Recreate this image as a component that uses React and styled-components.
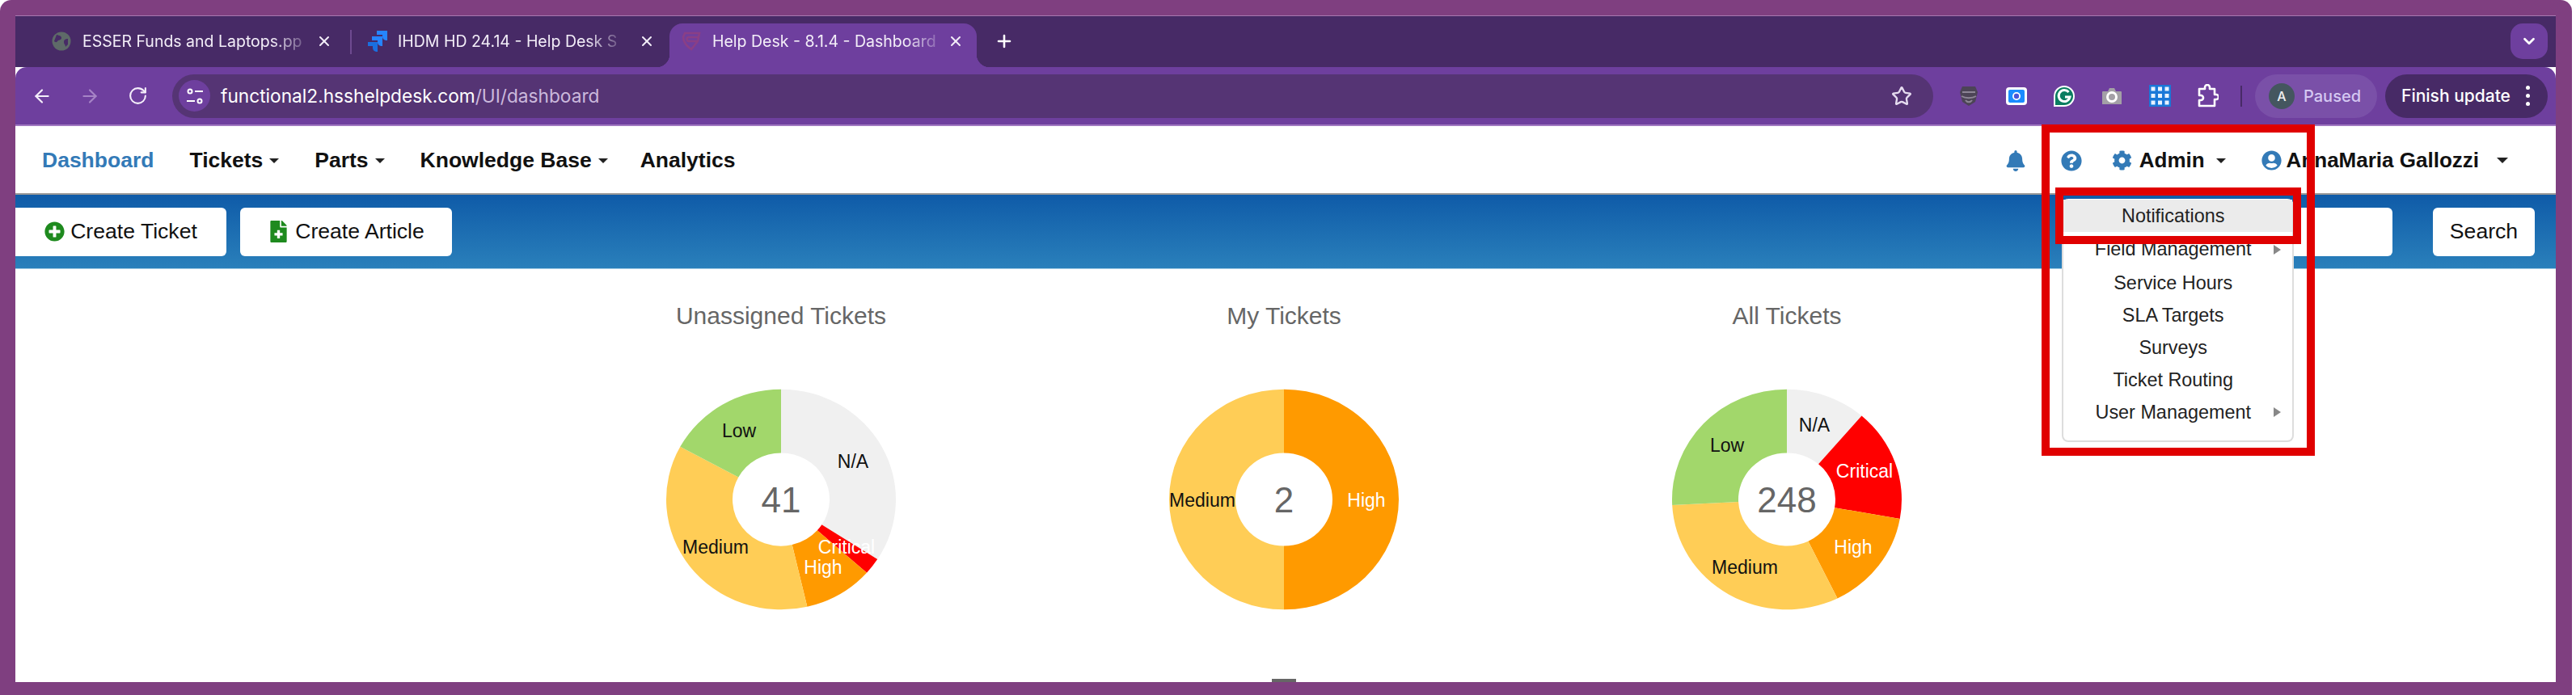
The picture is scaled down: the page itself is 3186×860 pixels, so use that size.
import React from "react";
import styled, { createGlobalStyle } from "styled-components";
import { ArrowLeft, ArrowRight, RotateCw, Star, X, Plus, ChevronDown } from "lucide-react";
import { FaBell, FaQuestionCircle, FaCog, FaUserCircle, FaPlusCircle, FaFileMedical } from "react-icons/fa";

const Global = createGlobalStyle`
  html, body { margin: 0; padding: 0; background: #fff; }
  body { font-family: "Liberation Sans", Arial, sans-serif; }
  * { box-sizing: border-box; }
`;

const Frame = styled.div`
  width: 3181px; height: 860px; background: #7f3f80; padding: 19px 20px 16px 19px;
  border-radius: 14px 14px 0 0;
`;
const Window = styled.div`
  position: relative; width: 3142px; height: 825px; display: flex; flex-direction: column;
  background: #fff; overflow: hidden; border-top: 1px solid #a878b0;
`;
const TabStrip = styled.div`
  height: 63px; background: #472a66; display: flex; align-items: flex-start; padding: 9px 10px 0 25px; flex: none;
`;
const TabRow = styled.div`
  display: flex; align-items: flex-start;
`;
const Tab = styled.div`
  position: relative; height: 54px; width: ${p => p.$w}px; display: flex; align-items: center; padding: 0 ${p => p.$pr}px 10px ${p => p.$pl}px;
  color: #f3eef8; font-family: Inter, "Liberation Sans", sans-serif; font-size: 19.5px;
  ${p => p.$active && `
    background: #6e3f9e; border-radius: 16px 16px 0 0;
    &::before, &::after { content: ""; position: absolute; bottom: 0; width: 16px; height: 16px; }
    &::before { left: -16px; background: radial-gradient(circle at 0 0, transparent 16px, #6e3f9e 16.5px); }
    &::after { right: -16px; background: radial-gradient(circle at 100% 0, transparent 16px, #6e3f9e 16.5px); }
  `}
`;
const TabDivider = styled.span`
  flex: none; width: 2px; height: 30px; margin: 8px 0 0 0; background: #6e4a90;
`;
const TabFavicon = styled.span`
  flex: none; width: 26px; height: 26px; margin-right: ${p => p.$gap}px; display: flex; align-items: center; justify-content: center;
`;
const TabLabel = styled.span`
  flex: none; white-space: nowrap;
  -webkit-mask-image: linear-gradient(90deg, #000 86%, rgba(0,0,0,.25) 100%);
  mask-image: linear-gradient(90deg, #000 86%, rgba(0,0,0,.25) 100%);
`;
const TabClose = styled.span`
  margin-left: auto; display: flex; color: #f3eef8;
`;
const NewTab = styled.span`
  display: flex; margin: 10px 0 0 22px; color: #fff;
`;
const TabMenu = styled.span`
  margin-left: auto; width: 46px; height: 44px; border-radius: 15px; background: #6e3f9e; display: flex; align-items: center; justify-content: center; color: #fff;
`;
const Toolbar = styled.div`
  height: 73px; flex: none; background: #6e3f9e; border-radius: 14px 14px 0 0; display: flex; align-items: center; padding: 0 10px 0 19px;
  border-bottom: 2px solid #a078c0; margin-top: 0;
`;
const ToolButton = styled.span`
  width: 28px; height: 28px; margin-right: ${p => p.$mr}px; display: flex; align-items: center; justify-content: center; flex: none;
  color: ${p => (p.$dim ? "#a684c6" : "#f4eefa")};
`;
const Omnibox = styled.div`
  flex: none; width: 2178px; height: 54px; background: #553474; border-radius: 27px; display: flex; align-items: center; padding: 0 26px 0 8px; color: #d8c9e6;
`;
const SiteChip = styled.span`
  width: 39px; height: 39px; border-radius: 50%; background: #6e3f9e; display: flex; align-items: center; justify-content: center; flex: none; margin-right: 13px;
`;
const Url = styled.span`
  font-family: Inter, "Liberation Sans", sans-serif; font-size: 22.7px; color: #cbb9dc; white-space: nowrap;
  b { color: #fff; font-weight: 400; }
`;
const OmniStar = styled.span`
  margin-left: auto; display: flex; color: #e6dcf0;
`;
const Extensions = styled.div`
  display: flex; align-items: center; gap: 31px; margin-left: 30px;
`;
const Extension = styled.span`
  width: 28px; height: 28px; display: flex; align-items: center; justify-content: center; color: #fff;
`;
const ToolSep = styled.span`
  width: 2px; height: 26px; background: #472a66; margin: 0 16px 0 27px;
`;
const ProfilePill = styled.div`
  width: 151px; height: 54px; border-radius: 27px; background: #7a50a8; display: flex; align-items: center; padding-left: 17px; color: #d5c8f2;
  font-family: Inter, "Liberation Sans", sans-serif; font-size: 20px; font-weight: 500;
`;
const Avatar = styled.span`
  width: 32px; height: 32px; border-radius: 50%; background: #44565f; color: #eee; display: flex; align-items: center; justify-content: center; font-size: 16px; margin-right: 11px;
`;
const FinishPill = styled.div`
  width: 201px; height: 54px; margin-left: 10px; border-radius: 27px; background: #472a66; display: flex; align-items: center; padding-left: 20px; color: #fff;
  font-family: Inter, "Liberation Sans", sans-serif; font-size: 21px; font-weight: 500;
`;
const Kebab = styled.span`
  margin-left: 19px; display: flex; flex-direction: column; gap: 5px;
  i { width: 5px; height: 5px; border-radius: 50%; background: #fff; display: block; }
`;
const Nav = styled.nav`
  height: 85px; flex: none; display: flex; align-items: center; padding: 2px 59px 0 33px; background: #fff; border-bottom: 2px solid #999;
  font-size: 26.5px; font-weight: 700; color: #111;
`;
const NavLink = styled.a`
  display: flex; align-items: center; margin-right: ${p => p.$mr || 44}px; color: ${p => (p.$active ? "#337ab7" : "#111")};
`;
const SmallCaret = styled.span`
  margin-left: ${p => p.$ml}px; width: 0; height: 0; border-left: ${p => p.$s}px solid transparent; border-right: ${p => p.$s}px solid transparent; border-top: ${p => p.$s}px solid #222;
`;
const NavRight = styled.div`
  margin-left: auto; display: flex; align-items: center; font-size: 26px;
`;
const NavIcon = styled.span`
  display: flex; color: #337ab7; margin-left: ${p => p.$ml || 0}px; margin-right: ${p => p.$mr || 0}px;
`;
const UserMenu = styled.div`
  position: relative; display: flex; align-items: center; margin-left: ${p => p.$ml}px;
`;
const Dropdown = styled.div`
  position: absolute; left: -62px; top: 63px; width: 287px; padding: 1px 0 15px; background: #fff; border: 2px solid #ddd; border-radius: 8px; z-index: 5;
  border-top: none; font-weight: 400; font-size: 23.4px; color: #222;
`;
const DropItem = styled.div`
  position: relative; height: ${p => (p.$tall ? 43 : 40)}px; display: flex; align-items: center; justify-content: center; padding-right: 11px;
  ${p => p.$hl && "background: #ebebeb;"}
`;
const SubArrow = styled.span`
  position: absolute; right: 14px; top: 50%; margin-top: -6px; width: 0; height: 0;
  border-top: 6px solid transparent; border-bottom: 6px solid transparent; border-left: 9px solid #888;
`;
const ActionBar = styled.div`
  height: 92px; flex: none; display: flex; align-items: center; padding-right: 26px; background: linear-gradient(180deg, #0f5ba8 0%, #2a80bb 100%); border-bottom: 1px solid #a8cfe6;
`;
const ActionButton = styled.button`
  height: 60px; width: ${p => p.$w}px; margin-left: ${p => p.$ml || 0}px; margin-right: ${p => p.$mr || 0}px; border: none; background: #fff; border-radius: ${p => (p.$flush ? "0 6px 6px 0" : "6px")};
  display: flex; align-items: center; justify-content: center; gap: 7px; font-family: "Liberation Sans", sans-serif; font-size: 26.6px; color: #111;
`;
const SearchInput = styled.input`
  margin-left: auto; width: 340px; height: 60px; border: none; border-radius: 6px; background: #fff;
`;
const Charts = styled.div`
  position: relative; flex: 1; display: grid; grid-template-columns: repeat(3, 622px); justify-content: center; padding: 40px 4px 0 0; background: #fff;
`;
const ChartCard = styled.div`
  display: flex; flex-direction: column; align-items: center;
`;
const ChartTitle = styled.div`
  height: 36px; line-height: 36px; font-size: 30px; color: #666;
`;
const ChartSvg = styled.svg`
  margin-top: 73px; overflow: visible;
`;
const GrabHandle = styled.span`
  position: absolute; left: 1554px; bottom: 0; width: 30px; height: 4px; background: #666;
`;
const RedBox = styled.div`
  position: absolute; left: ${p => p.$x - 19}px; top: ${p => p.$y - 19}px; width: ${p => p.$w}px; height: ${p => p.$h}px; border: 10px solid #e00000; z-index: 10; pointer-events: none;
`;

const colors = { na: "#f0f0f0", crit: "#ff0000", high: "#ff9a00", med: "#ffcd56", low: "#a2d76b" };

function Slices({ data }) {
  const total = data.reduce((s, d) => s + d.v, 0);
  let a = 0;
  return data.map(d => {
    const a0 = a;
    a += (d.v / total) * Math.PI * 2;
    const p = (r, t) => `${(r * Math.sin(t)).toFixed(2)} ${(-r * Math.cos(t)).toFixed(2)}`;
    const large = a - a0 > Math.PI ? 1 : 0;
    return (
      <path key={d.k} fill={colors[d.k]}
        d={`M${p(142, a0)}A142 142 0 ${large} 1 ${p(142, a)}L${p(60, a)}A60 60 0 ${large} 0 ${p(60, a0)}Z`} />
    );
  });
}

function Donut({ title, total, data, labels }) {
  return (
    <ChartCard>
      <ChartTitle>{title}</ChartTitle>
      <ChartSvg width="284" height="273" viewBox="-142 -136 284 273">
        <g transform="scale(1 0.96)"><Slices data={data} /></g>
        <text x="0" y="16" textAnchor="middle" fontSize="44" fill="#666" fontFamily="Liberation Sans">{total}</text>
        {labels.map(l => (
          <text key={l.t} x={l.x} y={l.y + 8} textAnchor="middle" fontSize="23" fill={l.w ? "#fff" : "#111"} fontFamily="Liberation Sans">{l.t}</text>
        ))}
      </ChartSvg>
    </ChartCard>
  );
}

const Globe = () => (
  <svg width="24" height="24" viewBox="0 0 24 24"><circle cx="12" cy="12" r="11.5" fill="#5e6a68" /><path d="M6 4c3 1 6 1 6 4s-4 2-5 4-3 1-4 0M20 9c-3 0-5 1-5 4s2 3 2 6l3-3z" fill="#472a66" /></svg>
);
const Jira = () => (
  <svg width="26" height="30" viewBox="0 0 26 30"><path d="M12 2h13v12c-4 0-6-2-6-5V7h-7z" fill="#2684ff" /><path d="M6 9h13v12c-4 0-6-2-6-5v-2H6z" fill="#2684ff" /><path d="M1 16h12v12c-4 0-6-2-6-5v-2H1z" fill="#1a6fe0" /></svg>
);
const HelpLogo = () => (
  <svg width="26" height="26" viewBox="0 0 26 26" fill="none" stroke="#8a3f86" strokeWidth="2.6"><path d="M5 3h18l-2 10-8 10C8 20 3 14 3 8zM22 8H9c-2 0-2 5 1 5h10" /></svg>
);
const Tune = () => (
  <svg width="24" height="24" viewBox="0 0 24 24" fill="none" stroke="#fff" strokeWidth="2"><circle cx="6" cy="6" r="2.5" /><path d="M12 6h10M2 18h10" /><circle cx="18" cy="18" r="2.5" /></svg>
);
const Mask = () => (
  <svg width="26" height="28" viewBox="0 0 26 28"><path d="M5 2h16l3 7-3 12-8 5-8-5L2 9z" fill="#4c4456" /><path d="M5 9h16M4 14c5 3 13 3 18 0M9 19c2 3 6 3 8 0" stroke="#8d8596" strokeWidth="2" fill="none" /></svg>
);
const Record = () => (
  <svg width="28" height="24" viewBox="0 0 28 24"><rect x="1" y="1" width="26" height="22" rx="4" fill="#fff" /><rect x="4" y="4" width="20" height="16" rx="2" fill="#1a8cff" /><circle cx="14" cy="12" r="5" fill="#fff" /><circle cx="14" cy="12" r="3.2" fill="#4a55d8" /></svg>
);
const Grammarly = () => (
  <svg width="28" height="28" viewBox="0 0 28 28"><path d="M14 1a13 13 0 0 1 0 26H1V14A13 13 0 0 1 14 1z" fill="#fff" /><path d="M14 3a11 11 0 0 1 0 22H3V14A11 11 0 0 1 14 3z" fill="#0a7d60" /><path d="M19.5 9A7 7 0 1 0 21 15h-6" stroke="#fff" strokeWidth="3" fill="none" /></svg>
);
const Camera = () => (
  <svg width="26" height="24" viewBox="0 0 26 24"><path d="M2 6h6l2-4h6l2 4h6a1 1 0 0 1 1 1v15H1V7a1 1 0 0 1 1-1z" fill="#a3a0a6" /><circle cx="13" cy="13" r="5.5" fill="#a3a0a6" stroke="#fff" strokeWidth="3" /></svg>
);
const GridApp = () => (
  <svg width="27" height="27" viewBox="0 0 27 27"><rect width="27" height="27" fill="#1a78d8" />{[5, 13.5, 22].map(x => [5, 13.5, 22].map(y => <rect key={`${x}${y}`} x={x - 2.5} y={y - 2.5} width="5" height="5" fill="#e8f2ff" />))}</svg>
);
const ExtensionPiece = () => (
  <svg width="28" height="30" viewBox="0 0 28 30" fill="none" stroke="#fff" strokeWidth="2.6" strokeLinejoin="round"><path d="M4 6h7V4a3 3 0 0 1 6 0v2h6v7h2a3 3 0 0 1 0 6h-2v8H4v-7h2a3 3 0 0 0 0-6H4z" /></svg>
);

const unassigned = [{ k: "na", v: 14 }, { k: "crit", v: 1 }, { k: "high", v: 4 }, { k: "med", v: 15 }, { k: "low", v: 7 }];
const mine = [{ k: "high", v: 1 }, { k: "med", v: 1 }];
const all = [{ k: "na", v: 28 }, { k: "crit", v: 41 }, { k: "high", v: 37 }, { k: "med", v: 78 }, { k: "low", v: 64 }];

export default function App() {
  return (
    <>
      <Global />
      <Frame>
        <Window>
          <TabStrip>
            <TabRow>
              <Tab $w={389} $pl={19} $pr={22}>
                <TabFavicon $gap={13}><Globe /></TabFavicon>
                <TabLabel>ESSER Funds and Laptops.pp</TabLabel>
                <TabClose><X size={20} strokeWidth={2.4} /></TabClose>
              </Tab>
              <TabDivider />
              <Tab $w={393} $pl={19} $pr={18}>
                <TabFavicon $gap={12}><Jira /></TabFavicon>
                <TabLabel>IHDM HD 24.14 - Help Desk S</TabLabel>
                <TabClose><X size={20} strokeWidth={2.4} /></TabClose>
              </Tab>
              <Tab $w={380} $pl={14} $pr={16} $active>
                <TabFavicon $gap={13}><HelpLogo /></TabFavicon>
                <TabLabel>Help Desk - 8.1.4 - Dashboard</TabLabel>
                <TabClose><X size={20} strokeWidth={2.4} /></TabClose>
              </Tab>
            </TabRow>
            <NewTab><Plus size={24} strokeWidth={2.6} /></NewTab>
            <TabMenu><ChevronDown size={22} strokeWidth={3} /></TabMenu>
          </TabStrip>
          <Toolbar>
            <ToolButton $mr={31}><ArrowLeft size={26} /></ToolButton>
            <ToolButton $mr={31} $dim><ArrowRight size={26} /></ToolButton>
            <ToolButton $mr={29}><RotateCw size={25} /></ToolButton>
            <Omnibox>
              <SiteChip><Tune /></SiteChip>
              <Url><b>functional2.hsshelpdesk.com</b>/UI/dashboard</Url>
              <OmniStar><Star size={26} strokeWidth={2.2} /></OmniStar>
            </Omnibox>
            <Extensions>
              <Extension><Mask /></Extension>
              <Extension><Record /></Extension>
              <Extension><Grammarly /></Extension>
              <Extension><Camera /></Extension>
              <Extension><GridApp /></Extension>
              <Extension><ExtensionPiece /></Extension>
            </Extensions>
            <ToolSep />
            <ProfilePill><Avatar>A</Avatar>Paused</ProfilePill>
            <FinishPill>Finish update<Kebab><i /><i /><i /></Kebab></FinishPill>
          </Toolbar>
          <Nav>
            <NavLink $active>Dashboard</NavLink>
            <NavLink>Tickets<SmallCaret $ml={8} $s={6} /></NavLink>
            <NavLink>Parts<SmallCaret $ml={8} $s={6} /></NavLink>
            <NavLink $mr={40}>Knowledge Base<SmallCaret $ml={8} $s={6} /></NavLink>
            <NavLink>Analytics</NavLink>
            <NavRight>
              <NavIcon><FaBell size={26} /></NavIcon>
              <NavIcon $ml={43}><FaQuestionCircle size={26} /></NavIcon>
              <UserMenu $ml={37}>
                <NavIcon $mr={9}><FaCog size={25} /></NavIcon>
                Admin
                <SmallCaret $ml={14} $s={6} />
                <Dropdown>
                  <DropItem $hl>Notifications</DropItem>
                  <DropItem $tall>Field Management<SubArrow /></DropItem>
                  <DropItem>Service Hours</DropItem>
                  <DropItem>SLA Targets</DropItem>
                  <DropItem>Surveys</DropItem>
                  <DropItem>Ticket Routing</DropItem>
                  <DropItem>User Management<SubArrow /></DropItem>
                </Dropdown>
              </UserMenu>
              <UserMenu $ml={44}>
                <NavIcon $mr={6}><FaUserCircle size={25} /></NavIcon>
                AnnaMaria Gallozzi
                <SmallCaret $ml={22} $s={7} />
              </UserMenu>
            </NavRight>
          </Nav>
          <ActionBar>
            <ActionButton $w={261} $mr={17} $flush><FaPlusCircle size={25} color="#1e8a1e" />Create Ticket</ActionButton>
            <ActionButton $w={262}><FaFileMedical size={27} color="#1e8a1e" />Create Article</ActionButton>
            <SearchInput aria-label="Search" />
            <ActionButton $w={126} $ml={50}>Search</ActionButton>
          </ActionBar>
          <Charts>
            <Donut title="Unassigned Tickets" total="41" data={unassigned} labels={[
              { t: "N/A", x: 89, y: -47 }, { t: "Low", x: -52, y: -85 }, { t: "Medium", x: -81, y: 59 },
              { t: "Critical", x: 81, y: 59, w: 1 }, { t: "High", x: 52, y: 84, w: 1 },
            ]} />
            <Donut title="My Tickets" total="2" data={mine} labels={[
              { t: "Medium", x: -101, y: 1 }, { t: "High", x: 102, y: 1, w: 1 },
            ]} />
            <Donut title="All Tickets" total="248" data={all} labels={[
              { t: "N/A", x: 34, y: -92 }, { t: "Low", x: -74, y: -67 }, { t: "Critical", x: 96, y: -35, w: 1 },
              { t: "High", x: 82, y: 59, w: 1 }, { t: "Medium", x: -52, y: 84 },
            ]} />
            <GrabHandle />
          </Charts>
          <RedBox $x={2525} $y={153} $w={338} $h={410} />
          <RedBox $x={2542} $y={231} $w={304} $h={70} />
        </Window>
      </Frame>
    </>
  );
}
